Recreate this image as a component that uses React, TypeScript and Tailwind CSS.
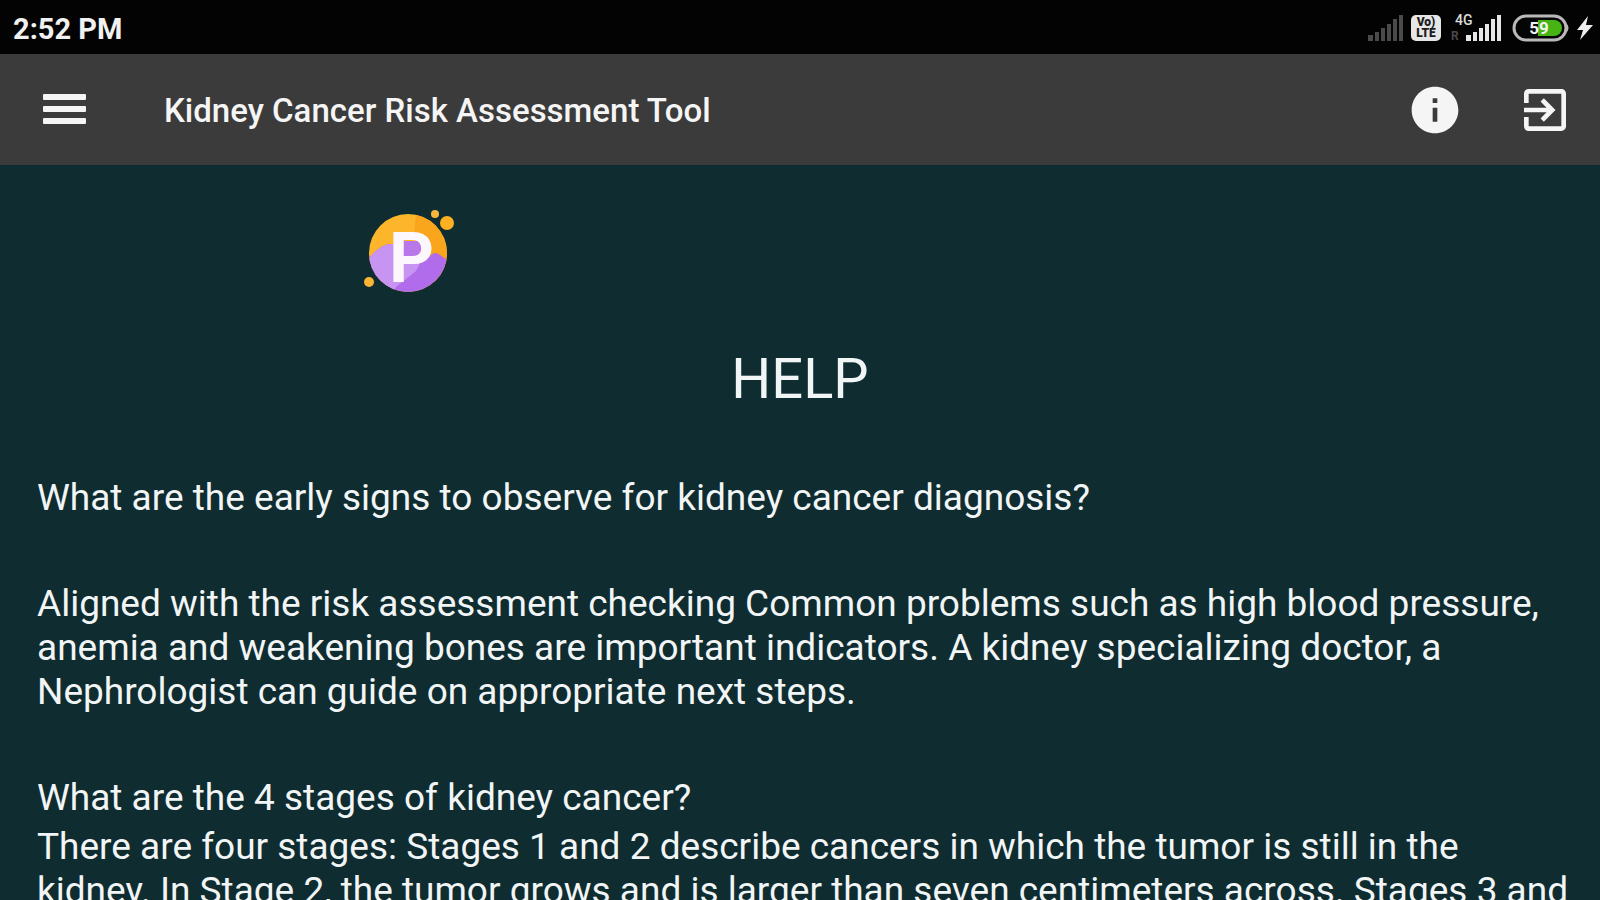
import React from 'react';
import { MdExitToApp, MdInfo } from 'react-icons/md';

const faqs = [
    {
        question: 'What are the early signs to observe for kidney cancer diagnosis?',
        answer: 'Aligned with the risk assessment checking Common problems such as high blood pressure, anemia and weakening bones are important indicators. A kidney specializing doctor, a Nephrologist can guide on appropriate next steps.',
        gap: 'gap-[62px]',
    },
    {
        question: 'What are the 4 stages of kidney cancer?',
        answer: 'There are four stages: Stages 1 and 2 describe cancers in which the tumor is still in the kidney. In Stage 2, the tumor grows and is larger than seven centimeters across. Stages 3 and',
        gap: 'gap-[5px]',
    },
];

const SignalBars = ({ className }: { className: string }) => (
    <svg className={className} viewBox="0 0 36 26" fill="currentColor" aria-hidden="true">
        <rect x="0" y="20" width="5" height="6" />
        <rect x="7" y="17" width="4" height="9" />
        <rect x="13" y="13" width="4" height="13" />
        <rect x="19" y="9" width="4" height="17" />
        <rect x="25" y="4" width="4" height="22" />
        <rect x="31" y="0" width="4" height="26" />
    </svg>
);

const StatusIcons = () => (
    <div className="flex items-center">
        <SignalBars className="h-[26px] w-9 text-[#4a4a4a]" />
        <div className="ml-[7px] flex h-[26px] w-[30px] flex-col items-center justify-center rounded-[5px] bg-[#e6e6e6] text-[12px] leading-[11px] font-black text-[#1c1c1c]">
            <span>Vo)</span>
            <span>LTE</span>
        </div>
        <div className="ml-[10px] flex h-7 w-[15px] flex-col justify-between">
            <span className="pl-1 text-[14px] leading-3 font-medium text-[#dddddd]">4G</span>
            <span className="text-[12px] leading-3 font-bold text-[#484848]">R</span>
        </div>
        <SignalBars className="h-[26px] w-9 text-[#e6e6e6]" />
        <svg className="ml-[9px] h-7 w-[58px]" viewBox="0 0 58 28" role="img" aria-label="Battery 59%">
            <rect x="3" y="2" width="52" height="24" rx="12" fill="#050505" stroke="#b9b9b9" strokeWidth="3" />
            <path d="M27 6H43A8 8 0 0 1 43 22H27Z" fill="#46b414" />
            <path d="M56 10Q59 14 56 18Z" fill="#b9b9b9" />
            <text x="28" y="20" textAnchor="middle" fontSize="17" fontWeight="700" fill="#f1f1f1">59</text>
        </svg>
        <svg className="ml-[7px] h-6 w-[18px]" viewBox="0 0 18 24" fill="#eeeeee" aria-hidden="true">
            <path d="M12 0L1 14H7L4 24L17 9H10Z" />
        </svg>
    </div>
);

const Logo = () => (
    <svg className="h-[100px] w-[100px]" viewBox="0 0 100 100" role="img" aria-label="P logo">
        <defs>
            <clipPath id="disc">
                <circle cx="48" cy="48" r="39" />
            </clipPath>
        </defs>
        <g clipPath="url(#disc)">
            <rect width="100" height="90" fill="#fdb62b" />
            <path d="M57 0H100V90H80L54 30Z" fill="#f9a61d" />
            <path d="M0 64C14 46 22 38 33 39C40 41 44 52 54 58C62 60 70 48 76 48C81 49 85 56 100 60V90H0Z" fill="#b06ceb" />
            <path d="M0 64C14 46 22 38 33 39C44 41 48 58 60 58L56 66L36 82L30 90H0Z" fill="#c894f2" />
            <path d="M43 36H58L64 44L56 52H43Z" fill="#b878ea" />
        </g>
        <circle cx="75" cy="9" r="4" fill="#f6b83c" />
        <circle cx="87" cy="18" r="7" fill="#fdb021" />
        <circle cx="9" cy="77" r="5" fill="#f9b534" />
        <text x="29" y="77" fontSize="70" fontWeight="700" fill="#fbf7fd">P</text>
    </svg>
);

const App = () => {
    return (
        <div className="flex h-screen flex-col overflow-hidden bg-[#0f2c30] font-['Roboto',sans-serif] text-[#f2f5f5]">
            <div className="flex h-[54px] shrink-0 items-center justify-between bg-[#030303] pt-[2px] pr-[6px] pl-[13px]">
                <span className="pt-[2px] text-[29px] leading-9 font-bold text-[#f1f1f1]">2:52 PM</span>
                <StatusIcons />
            </div>

            <header className="flex h-[111px] shrink-0 items-center bg-[#3b3b3b] pr-[27px] pl-[42px] text-[#f5f5f5]">
                <button type="button" aria-label="Open menu">
                    <svg className="h-8 w-[45px]" viewBox="0 0 45 32" fill="currentColor">
                        <rect x="1" y="0" width="43" height="6" rx="1" />
                        <rect x="1" y="12" width="43" height="6" rx="1" />
                        <rect x="1" y="24" width="43" height="6" rx="1" />
                    </svg>
                </button>
                <h1 className="ml-[77px] flex-1 pt-[3px] text-[33px] leading-10 font-medium">Kidney Cancer Risk Assessment Tool</h1>
                <div className="flex items-center gap-[54px]">
                    <button type="button" aria-label="Information">
                        <MdInfo className="h-14 w-14" />
                    </button>
                    <button type="button" aria-label="Exit">
                        <MdExitToApp className="h-14 w-14" />
                    </button>
                </div>
            </header>

            <main className="pt-10 pr-6 pl-[37px]">
                <div className="pl-[323px]">
                    <Logo />
                </div>
                <h2 className="mt-[42px] pr-[13px] text-center text-[56px] leading-[64px]">HELP</h2>
                <div className="mt-[65px] flex flex-col gap-[62px] text-[37px] leading-[44px]">
                    {faqs.map((faq) => (
                        <section key={faq.question} className={`flex flex-col ${faq.gap}`}>
                            <h3>{faq.question}</h3>
                            <p>{faq.answer}</p>
                        </section>
                    ))}
                </div>
            </main>
        </div>
    );
};

export default App;
